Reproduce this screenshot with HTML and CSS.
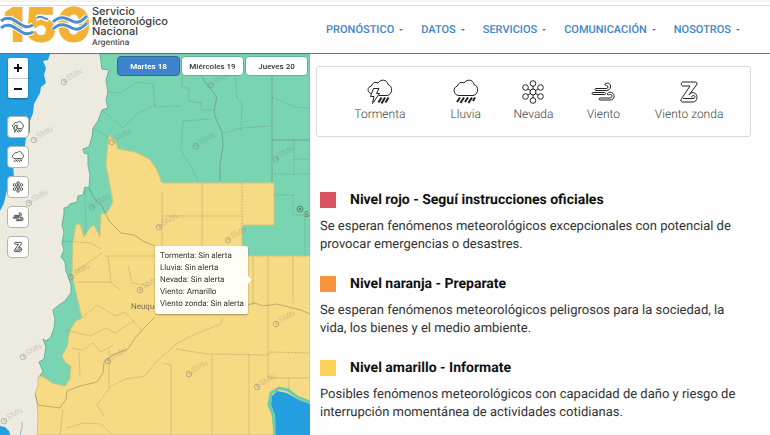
FILE: index.html
```html
<!DOCTYPE html>
<html lang="es">
<head>
<meta charset="utf-8">
<meta name="viewport" content="width=device-width, initial-scale=1">
<title>Servicio Meteorológico Nacional</title>
<link rel="stylesheet" href="styles.css">
</head>
<body>
<svg class="sprite" aria-hidden="true">
  <symbol id="storm" viewBox="0 0 26 26">
    <path d="M4 14.500C0 13 0 8 4.500 7C5 4 8.500 2.500 11 4C13.500 0 20 0 21 5.500C26 7 26 15.500 20 16.500H12"/>
    <path d="M6.500 9.500h5.500l-2.500 5h3l-7 10 1.500-7H3.500z"/>
    <path class="rain" d="M14.500 18.500l-3 5M18 18.500l-3.500 6M21.500 18.500l-3 5"/>
  </symbol>
  <symbol id="rain" viewBox="0 0 26 26">
    <path d="M6 16.500C0 16.500-.5 8 4.500 7C5 4 8.500 2.500 11 4C13.500 0 20 0 21 5.500C26 7 26 15.500 20 16.500Z"/>
    <path class="rain" d="M7 18.500l-3 4.500M11 18.500l-3.500 5.500M15 18.500l-3 4.500M19 18.500l-3.500 5.500M22 18.500l-2 3.500"/>
  </symbol>
  <symbol id="snow" viewBox="0 0 26 26">
    <circle cx="13" cy="13" r="3"/>
    <circle cx="13" cy="4.500" r="2.800"/><circle cx="13" cy="21.500" r="2.800"/>
    <circle cx="5.500" cy="8.500" r="2.800"/><circle cx="20.500" cy="8.500" r="2.800"/>
    <circle cx="5.500" cy="17.500" r="2.800"/><circle cx="20.500" cy="17.500" r="2.800"/>
    <path d="M13 7.300V10M13 16v2.700M8 10l2.400 1.500M15.600 14.500l2.500 1.500M18 10l-2.400 1.500M10.400 14.500L8 16"/>
  </symbol>
  <symbol id="wind" viewBox="0 0 26 26">
    <path d="M6 9.500h10.500c2 0 2-3 0-3-1 0-2-.5-1.500-1.700C18 3 21 5 20.500 8c0 2-2 3.500-4 3.500H6c-1.300 0-1.300-2 0-2z"/>
    <path d="M3 13.500h11.500c1.300 0 1.300 2 0 2H3c-1.300 0-1.300-2 0-2zM10 19h10c2.500 0 2.500-3.500.5-3.500-1.500 0-2 .8-3 0-.8-1.500 2-2.800 4-2 4 1.500 3.500 7.500-1.500 7.500H10c-1.300 0-1.300-2 0-2z"/>
  </symbol>
  <symbol id="zonda" viewBox="0 0 26 26">
    <path d="M7 3h12.500c1.500 0 2 1.500 1 3L13 16c1-2 3.500-3 5.500-2 4 2 3 9-1.500 9H6.500c-2 0-2-2-1-3.300L14 7H7c-2.300 0-2.300-4 0-4z"/>
    <path d="M7 19.500h10c2.500 0 2.500-3 .5-3-1.500 0-2 1-1.500 2"/>
  </symbol>
  <symbol id="smn" viewBox="0 0 26 18" overflow="visible">
    <circle cx="4" cy="14" r="2.800"/><path d="M4 12v2h2"/>
    <text x="8" y="13" transform="rotate(-27 8 13)">SMN</text>
  </symbol>
</svg>

<div class="strip"></div>
<header class="header">
  <a class="brand" href="#">
    <svg class="brand-mark" viewBox="0 0 90 40" aria-hidden="true">
      <text class="brand-number" x="3" y="35">150</text>
      <g class="brand-gap">
        <path d="M1 14C8 8 14 13 20 17S29 20 33 18M1 21C8 15 14 20 20 24S29 27 33 25M37 11c5-4 7 2 11 1M53 15C60 8 66 11 72 14S82 14 87 9M53 22C60 15 66 18 72 21S82 21 87 16"/>
      </g>
      <g class="brand-wave">
        <path d="M1 14C8 8 14 13 20 17S29 20 33 18M1 21C8 15 14 20 20 24S29 27 33 25M53 15C60 8 66 11 72 14S82 14 87 9M53 22C60 15 66 18 72 21S82 21 87 16"/>
        <path class="thin" d="M37 11c5-4 7 2 11 1"/>
      </g>
    </svg>
    <span class="brand-name">Servicio<br>Meteorológico<br>Nacional<br><small>Argentina</small></span>
  </a>
  <nav class="nav">
    <a href="#">PRONÓSTICO</a>
    <a href="#">DATOS</a>
    <a href="#">SERVICIOS</a>
    <a href="#">COMUNICACIÓN</a>
    <a href="#">NOSOTROS</a>
  </nav>
</header>

<main class="main">
  <section class="map">
    <svg class="map-canvas" viewBox="0 54 310 381" preserveAspectRatio="xMinYMin slice" role="img" aria-label="Mapa de alertas">
      <rect class="land" x="0" y="54" width="310" height="381"/>
      <path class="sea" d="M0 54H50L48 60 43 61 46 68 44 75 46 83 41 87 40 93 34 104 33 113 30 121 30 132 26 138 24 152 13 164 14 178 7 190 4 203 0 211Z"/>
      <path class="sea" d="M0 426l5 1 4 4 1 4H0Z"/>
      <path class="creek" d="M22 422v6l-2 7"/>
      <path class="green" d="M100 54L102 69 109 70 106 80 108 92 106 100 108 108 102 110 98 121 93 128 92 137 89 147 83 149 84 153 88 154 88 165 90 175 89 188 85 187 83 195 78 196 77 202 70 204 68 207 64 208 64 214 62 225 64 232 62 243 64 250 61 257 65 262 66 271 68 276 71 285 71 293 65 301 59 305 53 310 55 319 54 328 51 337 46 341 43 339 46 347 44 359 39 362 43 371 39 377 60 400 180 280 310 260V54Z"/>
      <path class="yellow" d="M109 136L115 140 118 149 135 152 149 159 156 168 162 183H274V225H242V256H310V435H37L38 416 37 402 35 393 38 386 38 377 42 376 52 383 65 386 70 379 71 366 66 363 62 356 67 347 70 330 76 321 82 318 78 301 75 287 72 275 73 242 76 225 80 224 84 237 89 229 94 225 100 237 101 214 107 213 113 202 110 185 106 165 107 152Z"/>
      <path class="shore" d="M310 402L297 397 288 390 279 388 271 393 269 405 273 414 274 423 275 435"/>
      <path class="sea" d="M310 404L297 399 287 393 277 391 272 396 271 405 275 415 276 435H310Z"/>
      <g class="province">
        <path d="M201 75L208 86 217 97 214 110 216 119 222 132 223 145 220 165V181M272 75V182M272 140H310"/>
        <path d="M89 188L94 198 102 206 109 221 121 233 134 235 145 242 155 246M35 394L38 405 60 408 66 399 67 391 80 386 97 382 103 373 104 362 113 355 128 349 135 338 146 326 155 317"/>
        <path d="M247 305L255 303 263 306 277 304 289 307 301 310 310 314"/>
      </g>
      <g class="district">
        <path d="M182 75V88H189V101L201 103V110H214M223 133L242 128 270 126M162 191V246M202 183V246M162 216H242M93 128L109 138M85 189L86 235M253 256V305M268 256V345M293 256V303M105 256H155M121 290L111 283 108 256M76 282H111M75 272L102 253"/>
        <path d="M66 330L90 336 106 328 115 333 135 320M82 318L97 305 115 316 125 312 141 330M72 348L82 350 93 343 101 352 113 345M79 352L80 377M109 350V389M110 387L125 379 145 376 155 363 176 344 193 335 221 324 222 318M109 389L97 405 104 416M63 410L60 435M163 363L171 365 171 435M212 355V435M249 354V435M268 345V378H310M289 378V391M128 265l4 18 18 3M242 281h11"/>
      </g>
      <g class="dotted">
        <path d="M107 92L120 93 138 82 153 84 155 107 182 106M102 110L123 128 137 114 155 105M183 121L213 119M183 121L181 150 190 165 198 181M235 75L237 98 242 103 241 131M272 97L295 107 310 108M294 140V174M274 174H310M295 159H310M242 183V225M274 195H293V215H310M305 216V256M62 241L91 243 101 249M176 349L208 354 268 355 270 352 310 353M67 428L84 423 101 424 112 434"/>
      </g>
      <g class="marks">
        <use href="#smn" x="60" y="68" width="26" height="18"/>
        <use href="#smn" x="30" y="126" width="26" height="18"/>
        <use href="#smn" x="108" y="128" width="26" height="18"/>
        <use href="#smn" x="207" y="71" width="26" height="18"/>
        <use href="#smn" x="192" y="132" width="26" height="18"/>
        <use href="#smn" x="272" y="145" width="26" height="18"/>
        <use href="#smn" x="25" y="189" width="26" height="18"/>
        <use href="#smn" x="88" y="193" width="26" height="18"/>
        <use href="#smn" x="67" y="263" width="26" height="18"/>
        <use href="#smn" x="136" y="276" width="26" height="18"/>
        <use href="#smn" x="155" y="213" width="26" height="18"/>
        <use href="#smn" x="224" y="226" width="26" height="18"/>
        <use href="#smn" x="19" y="343" width="26" height="18"/>
        <use href="#smn" x="104" y="347" width="26" height="18"/>
        <use href="#smn" x="0" y="407" width="26" height="18"/>
        <use href="#smn" x="272" y="310" width="26" height="18"/>
        <use href="#smn" x="185" y="360" width="26" height="18"/>
        <use href="#smn" x="253" y="373" width="26" height="18"/>
      </g>
      <g class="town">
        <circle cx="300" cy="209" r="3"/><circle class="town-dot" cx="300" cy="209" r="1"/>
        <text x="304" y="217">S</text>
        <text x="131" y="309">Neuquén</text>
      </g>
    </svg>

    <div class="zoom">
      <button type="button" aria-label="Acercar"><svg viewBox="0 0 10 10"><path d="M1 5h8M5 1v8"/></svg></button>
      <button type="button" aria-label="Alejar"><svg viewBox="0 0 10 10"><path d="M1 5h8"/></svg></button>
    </div>
    <div class="layers">
      <button type="button" aria-label="Tormenta"><svg><use href="#storm"/></svg></button>
      <button type="button" aria-label="Lluvia"><svg><use href="#rain"/></svg></button>
      <button type="button" aria-label="Nevada"><svg><use href="#snow"/></svg></button>
      <button type="button" aria-label="Viento"><svg><use href="#wind"/></svg></button>
      <button type="button" aria-label="Viento zonda"><svg><use href="#zonda"/></svg></button>
    </div>
    <div class="days">
      <button type="button" class="active">Martes 18</button>
      <button type="button">Miércoles 19</button>
      <button type="button">Jueves 20</button>
    </div>
    <div class="tooltip" role="tooltip">Tormenta: Sin alerta<br>Lluvia: Sin alerta<br>Nevada: Sin alerta<br>Viento: Amarillo<br>Viento zonda: Sin alerta</div>
  </section>

  <section class="info">
    <ul class="events">
      <li><svg><use href="#storm"/></svg>Tormenta</li>
      <li><svg><use href="#rain"/></svg>Lluvia</li>
      <li><svg><use href="#snow"/></svg>Nevada</li>
      <li><svg><use href="#wind"/></svg>Viento</li>
      <li><svg><use href="#zonda"/></svg>Viento zonda</li>
    </ul>
    <div class="levels">
      <article class="level level-red">
        <h2>Nivel rojo - Seguí instrucciones oficiales</h2>
        <p>Se esperan fenómenos meteorológicos excepcionales con potencial de provocar emergencias o desastres.</p>
      </article>
      <article class="level level-orange">
        <h2>Nivel naranja - Preparate</h2>
        <p>Se esperan fenómenos meteorológicos peligrosos para la sociedad, la vida, los bienes y el medio ambiente.</p>
      </article>
      <article class="level level-yellow">
        <h2>Nivel amarillo - Informate</h2>
        <p>Posibles fenómenos meteorológicos con capacidad de daño y riesgo de interrupción momentánea de actividades cotidianas.</p>
      </article>
    </div>
  </section>
</main>
</body>
</html>
```
FILE: styles.css
```css
* { box-sizing: border-box; }

body {
  margin: 0;
  min-height: 100vh;
  display: flex;
  flex-direction: column;
  background: #fefefe;
  color: #333;
  font-family: Roboto, "Liberation Sans", sans-serif;
  text-rendering: geometricPrecision;
  overflow-x: hidden;
}

button { font-family: inherit; cursor: pointer; }

.sprite { position: absolute; width: 0; height: 0; }

.strip {
  height: 6px;
  border-bottom: 1px solid #e2e2e2;
  background: linear-gradient(#f4f4f4 2px, #fefefe 2px);
}

.header {
  display: flex;
  justify-content: space-between;
  align-items: center;
  height: 48px;
  padding-right: 30px;
  border-bottom: 1px solid #3f7fb5;
}

.brand {
  display: flex;
  align-items: center;
  gap: 2px;
  padding-bottom: 6px;
  color: #3c3c3c;
  text-decoration: none;
}

.brand-mark { width: 90px; height: 40px; overflow: visible; }
.brand-number { font: 900 48px Inter, sans-serif; fill: #f2b233; }
.brand-gap path { fill: none; stroke: #fefefe; stroke-width: 5; }
.brand-wave path { fill: none; stroke: #4a90cf; stroke-width: 3; }
.brand-wave .thin { stroke-width: 2; }

.brand-name { font: 500 11px/10px Inter, sans-serif; }
.brand-name small { font-size: 8px; }

.nav { display: flex; gap: 18px; }
.nav a {
  display: flex;
  align-items: center;
  gap: 5px;
  color: #4186c6;
  font-size: 11px;
  font-weight: 500;
  line-height: 12px;
  text-decoration: none;
}
.nav a::after {
  content: "";
  border: 2px solid transparent;
  border-top-color: #5a7f9f;
  border-bottom: 0;
}

.main {
  flex: 1;
  display: grid;
  grid-template-columns: 31fr 46fr;
}

.map { position: relative; overflow: hidden; }
.map-canvas { position: absolute; inset: 0; width: 100%; height: 100%; }
.land { fill: #edebe0; }
.sea { fill: #239fe0; }
.creek { fill: none; stroke: #8fbcd2; }
.green { fill: #79d5b1; stroke: #62b596; stroke-width: 1; }
.yellow { fill: #f6da84; stroke: #d6c47c; stroke-width: 1; }
.shore { fill: none; stroke: #68cdaf; stroke-width: 3; }
.province path { fill: none; stroke: #59604a; stroke-opacity: .38; stroke-width: 1; }
.district path { fill: none; stroke: #716f4e; stroke-opacity: .22; }
.dotted path { fill: none; stroke: #596d4e; stroke-opacity: .3; stroke-dasharray: 2 1; }
.marks { fill: none; stroke: #777; stroke-width: 1; opacity: .45; }
#smn text { font-size: 8px; fill: #777; stroke: none; opacity: .6; }
.town { fill: none; stroke: #54856f; }
.town text { fill: #76735a; stroke: none; font-size: 8px; }
.town-dot { fill: #54856f; }

.zoom, .layers, .days { position: absolute; display: flex; }

.zoom {
  top: 4px;
  left: 8px;
  flex-direction: column;
  border-radius: 2px;
  overflow: hidden;
  box-shadow: 0 1px 2px #0006;
}
.zoom button {
  width: 20px;
  height: 20px;
  padding: 5px;
  border: 0;
  background: #fff;
}
.zoom button + button { border-top: 1px solid #ccc; }
.zoom svg { display: block; width: 10px; height: 10px; stroke: #111; stroke-width: 2; }

.layers { top: 62px; left: 7px; flex-direction: column; gap: 8px; }
.layers button {
  width: 22px;
  height: 22px;
  padding: 4px;
  border: 1px solid #b5b5ac;
  border-radius: 4px;
  background: #fff;
}
.layers svg { display: block; width: 12px; height: 12px; fill: none; stroke: #444; stroke-width: 2; }

.days { top: 2px; right: 2px; left: 117px; gap: 1px; }
.days button {
  flex: 1;
  height: 20px;
  padding: 0;
  border: 1px solid #5fb391;
  border-radius: 4px;
  background: #fff;
  color: #333;
  font-size: 8px;
  font-weight: 500;
}
.days .active { border-color: #2d66a0; background: #4083cd; color: #fff; font-weight: 700; }

.tooltip {
  position: absolute;
  top: 192px;
  left: 155px;
  padding: 4px 4px 4px 5px;
  border-radius: 2px;
  background: #fffdf6;
  box-shadow: 0 1px 2px #0005;
  font-size: 8px;
  line-height: 12px;
  white-space: nowrap;
}
.tooltip::after {
  content: "";
  position: absolute;
  top: 30px;
  left: 100%;
  border: 4px solid transparent;
  border-left-color: #fffdf6;
  border-right: 0;
}

.info { padding: 12px 19px 12px 6px; }

.events {
  display: grid;
  grid-template-columns: 86fr 86fr 50fr 90fr 82fr;
  margin: 0;
  padding: 12px 20px 13px;
  border: 1px solid #d9d9d9;
  border-radius: 3px;
  list-style: none;
  color: #444;
  font-size: 12px;
  font-weight: 300;
  line-height: 18px;
}
.events li { display: flex; flex-direction: column; align-items: center; white-space: nowrap; }
.events svg { width: 26px; height: 26px; fill: none; stroke: #222; stroke-width: 1; }
.rain { stroke-width: 2; }

.levels {
  display: grid;
  gap: 21px;
  padding: 54px 4px 0;
}
.level h2 {
  display: flex;
  align-items: center;
  gap: 14px;
  margin: 0 0 9px;
  color: #111;
  font-size: 14px;
  font-weight: 700;
  line-height: 18px;
}
.level h2::before { content: ""; width: 16px; height: 16px; background: var(--level); }
.level p { margin: 0; font-size: 13px; line-height: 18px; }
.level-red { --level: #d9525f; }
.level-orange { --level: #f7943c; }
.level-yellow { --level: #fdd05a; }
```
